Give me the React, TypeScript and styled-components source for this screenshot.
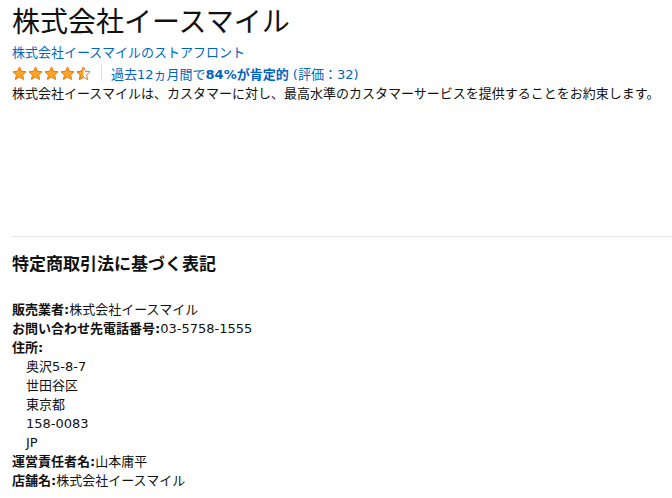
import React from 'react'
import styled, { createGlobalStyle } from 'styled-components'

const GlobalStyle = createGlobalStyle`
  body {
    margin: 0;
    background: #ffffff;
    color: #111111;
    font-family: 'DejaVu Sans', 'Noto Sans CJK JP', sans-serif;
  }
`

const Page = styled.div`
  padding: 2px 12px 0 12px;
  width: 672px;
  box-sizing: border-box;
`

const Title = styled.h1`
  margin: 0;
  font-family: 'Noto Sans CJK JP', sans-serif;
  font-size: 28px;
  font-weight: 400;
  line-height: 36px;
  color: #111111;
`

const StoreLink = styled.a`
  display: block;
  margin-top: 5px;
  font-size: 13px;
  line-height: 19px;
  color: #0066c0;
  text-decoration: none;
`

const RatingRow = styled.div`
  display: flex;
  align-items: center;
  height: 22px;
  font-size: 13px;
  color: #0066c0;
`

const Stars = styled.div`
  display: flex;
  gap: 1px;
`

const Divider = styled.span`
  width: 1px;
  height: 16px;
  background: #dddddd;
  margin: 0 9px 0 10px;
`

const Bold = styled.b`
  font-weight: 700;
`

const Paragraph = styled.p`
  margin: 0;
  font-size: 13px;
  line-height: 19px;
  color: #111111;
  white-space: nowrap;
`

const Rule = styled.hr`
  margin: 133px -12px 0 0;
  border: 0;
  border-top: 1px solid #e7e7e7;
`

const SectionTitle = styled.h3`
  margin: 15px 0 0 0;
  font-size: 17px;
  font-weight: 700;
  line-height: 24px;
  color: #111111;
`

const InfoList = styled.div`
  margin-top: 24px;
  font-size: 13px;
  line-height: 19px;
  color: #111111;
`

const InfoLine = styled.div<{ $indent?: boolean }>`
  padding-left: ${(p) => (p.$indent ? '14px' : '0')};
`

const Label = styled.span`
  font-weight: 700;
`

const STAR = 'M12 1.5l3.2 6.9 7.3.8-5.5 5 1.5 7.4L12 17.8l-6.5 3.8 1.5-7.4-5.5-5 7.3-.8z'

const Star = ({ half }: { half?: boolean }) => (
  <svg width="15" height="15" viewBox="0 0 24 24">
    <defs>
      <clipPath id="halfclip">
        <rect x="0" y="0" width="12" height="24" />
      </clipPath>
    </defs>
    <path
      d={STAR}
      fill={half ? '#ffffff' : '#ffa41c'}
      stroke="#de7921"
      strokeWidth="1.6"
      strokeLinejoin="round"
    />
    {half && (
      <path
        d={STAR}
        fill="#ffa41c"
        stroke="#de7921"
        strokeWidth="1.6"
        strokeLinejoin="round"
        clipPath="url(#halfclip)"
      />
    )}
  </svg>
)

const address = ['奥沢5-8-7', '世田谷区', '東京都', '158-0083', 'JP']

export default function App() {
  return (
    <Page>
      <GlobalStyle />
      <Title>株式会社イースマイル</Title>
      <StoreLink href="#">株式会社イースマイルのストアフロント</StoreLink>
      <RatingRow>
        <Stars>
          <Star />
          <Star />
          <Star />
          <Star />
          <Star half />
        </Stars>
        <Divider />
        <span>
          過去12ヵ月間で<Bold>84%が肯定的</Bold> (評価：32)
        </span>
      </RatingRow>
      <Paragraph>
        株式会社イースマイルは、カスタマーに対し、最高水準のカスタマーサービスを提供することをお約束します。
      </Paragraph>
      <Rule />
      <SectionTitle>特定商取引法に基づく表記</SectionTitle>
      <InfoList>
        <InfoLine>
          <Label>販売業者:</Label>株式会社イースマイル
        </InfoLine>
        <InfoLine>
          <Label>お問い合わせ先電話番号:</Label>03-5758-1555
        </InfoLine>
        <InfoLine>
          <Label>住所:</Label>
        </InfoLine>
        {address.map((line) => (
          <InfoLine key={line} $indent>
            {line}
          </InfoLine>
        ))}
        <InfoLine>
          <Label>運営責任者名:</Label>山本庸平
        </InfoLine>
        <InfoLine>
          <Label>店舗名:</Label>株式会社イースマイル
        </InfoLine>
      </InfoList>
    </Page>
  )
}
